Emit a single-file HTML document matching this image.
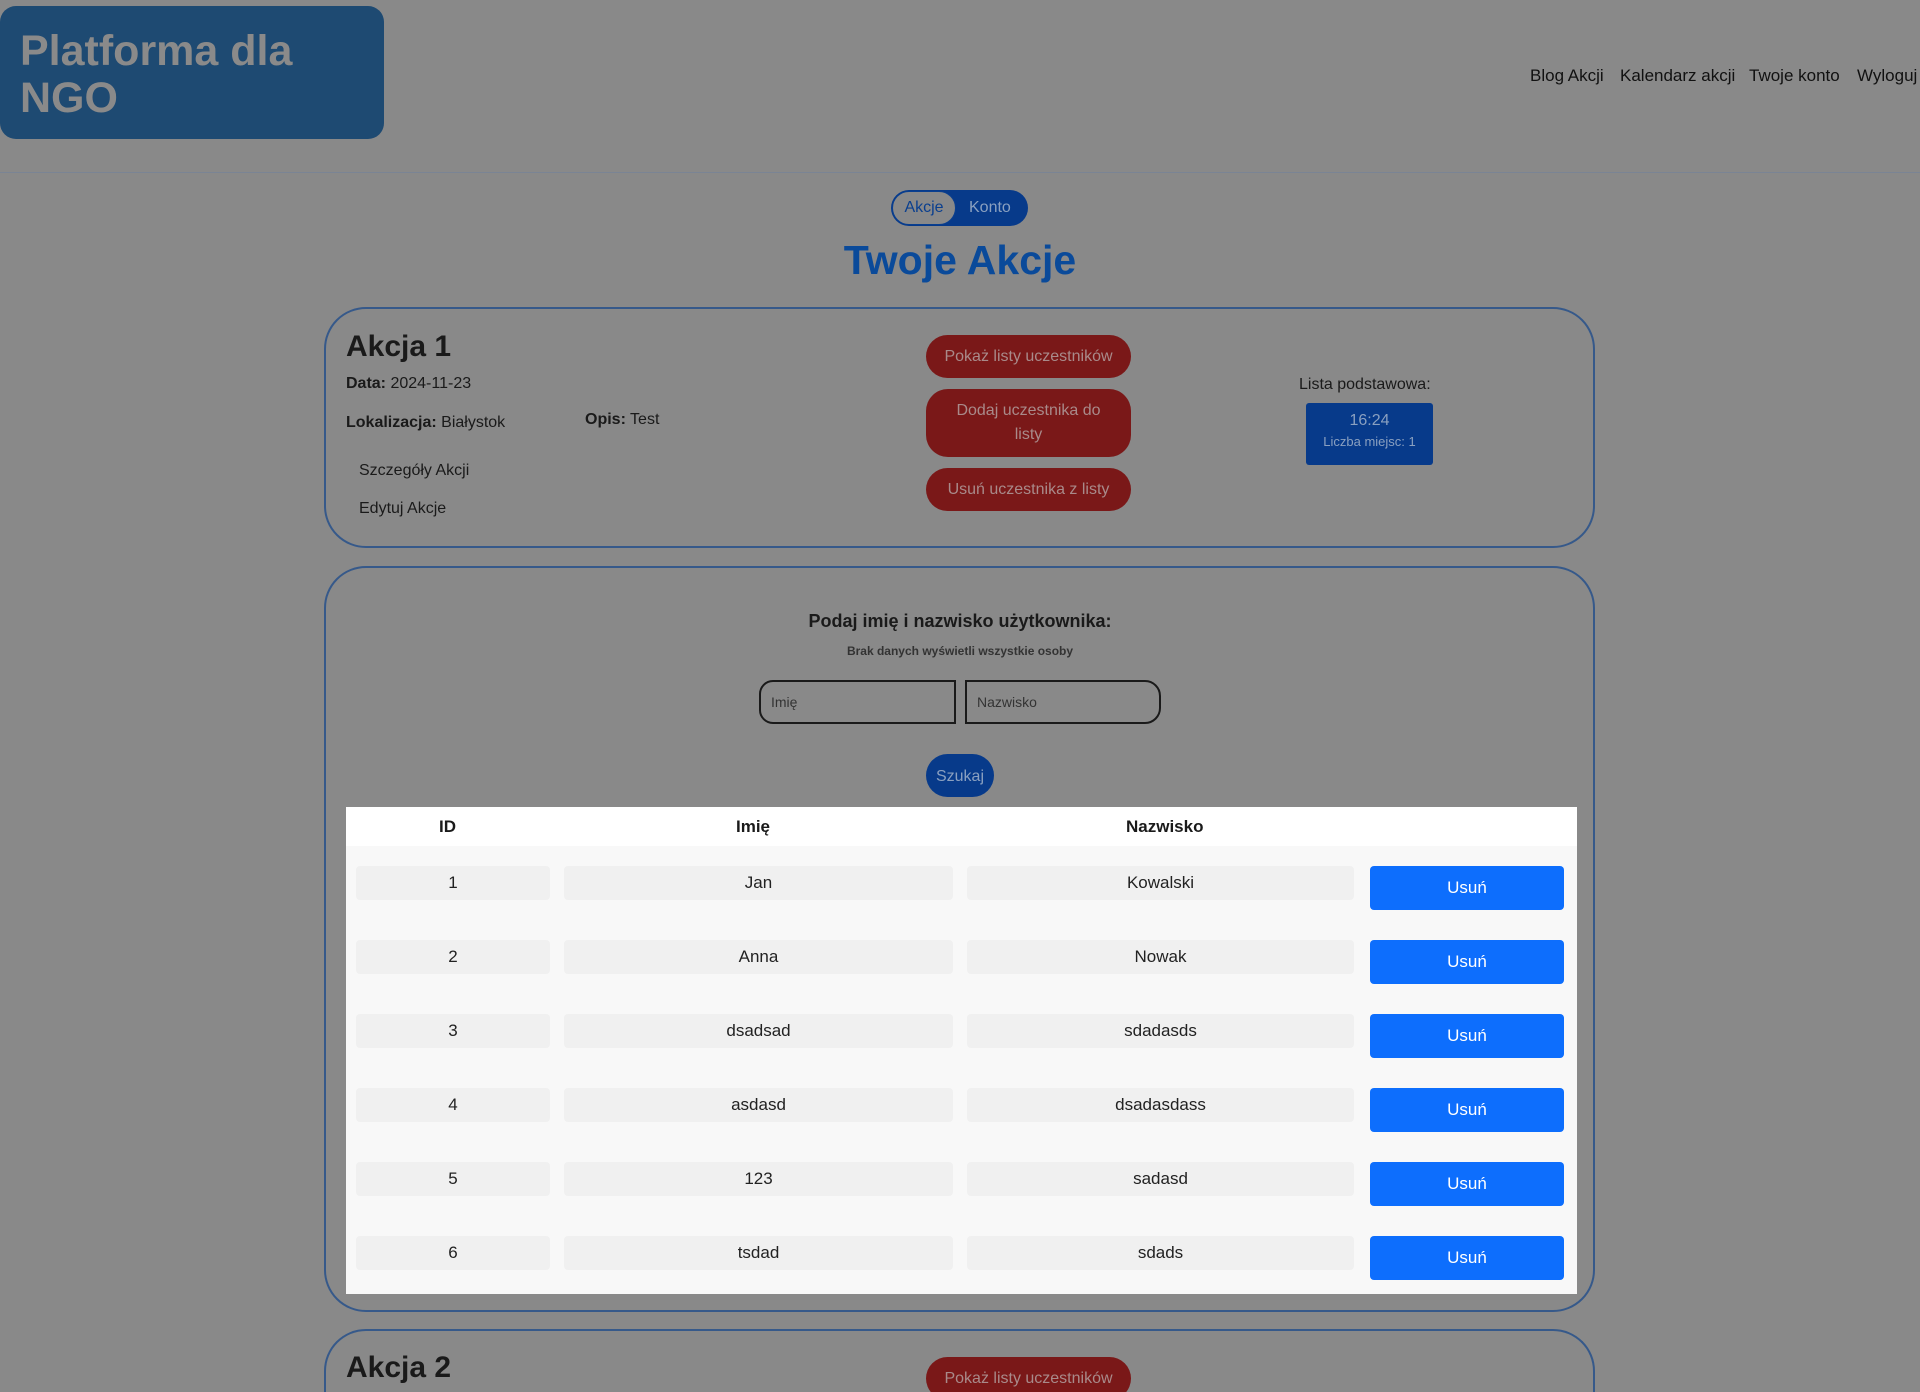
<!DOCTYPE html>
<html><head><meta charset="utf-8"><style>
*{box-sizing:border-box;margin:0;padding:0}
html,body{width:1920px;height:1392px;overflow:hidden}
body{background:#898989;font-family:"Liberation Sans","DejaVu Sans",sans-serif;color:#1a1a1a}
#w{position:relative;width:1920px;height:1392px;overflow:hidden}
.a{position:absolute}
.logo{left:0;top:6px;width:384px;height:133px;background:#1e4a72;border-radius:16px;color:#8a8a8a;font-weight:bold;font-size:43px;line-height:47px;padding:22px 0 0 20px}
.nav{top:66px;font-size:17px;color:#111}
.hr{left:0;top:172px;width:1920px;height:1px;background:#7a8494}
.card{left:324px;width:1271px;border:2px solid #36598a;border-radius:42px}
.rb{left:926px;width:205px;background:#7a1818;border-radius:22px;color:#a98a8a;font-size:16px;text-align:center;display:flex;align-items:center;justify-content:center;line-height:24px}
.lbl{font-size:16px}
.cell{background:#f0f0f0;border-radius:4px;height:34px;font-size:17px;text-align:center;line-height:34px;color:#222}
.btn{background:#0d6efd;border-radius:4px;height:44px;width:194px;left:1370px;color:#fff;font-size:17px;text-align:center;line-height:44px}
</style></head><body><div id="w">
<div class="a logo">Platforma dla<br>NGO</div>
<div class="a nav" style="left:1530px">Blog Akcji</div>
<div class="a nav" style="left:1620px">Kalendarz akcji</div>
<div class="a nav" style="left:1749px">Twoje konto</div>
<div class="a nav" style="left:1857px">Wyloguj</div>
<div class="a hr"></div>

<div class="a" style="left:891px;top:190px;width:137px;height:36px;background:#073a8a;border-radius:18px"></div>
<div class="a" style="left:892px;top:191px;width:64px;height:34px;border:1.5px solid #0a3f8f;background:#898989;border-radius:17px;color:#0a3f8f;font-size:16px;text-align:center;line-height:31px">Akcje</div>
<div class="a" style="left:969px;top:199px;font-size:16px;color:#8aa0c0">Konto</div>
<div class="a" style="left:0;width:1920px;top:237px;text-align:center;font-size:41px;font-weight:bold;color:#0a4a9a">Twoje Akcje</div>

<div class="a card" style="top:307px;height:241px"></div>
<div class="a" style="left:346px;top:330px;font-size:30px;font-weight:bold">Akcja 1</div>
<div class="a lbl" style="left:346px;top:375px"><b>Data:</b> 2024-11-23</div>
<div class="a lbl" style="left:346px;top:414px"><b>Lokalizacja:</b> Białystok</div>
<div class="a lbl" style="left:585px;top:411px"><b>Opis:</b> Test</div>
<div class="a lbl" style="left:359px;top:462px">Szczegóły Akcji</div>
<div class="a lbl" style="left:359px;top:500px">Edytuj Akcje</div>
<div class="a rb" style="top:335px;height:43px">Pokaż listy uczestników</div>
<div class="a rb" style="top:389px;height:68px;padding:0 18px">Dodaj uczestnika do listy</div>
<div class="a rb" style="top:468px;height:43px">Usuń uczestnika z listy</div>
<div class="a lbl" style="left:1299px;top:376px">Lista podstawowa:</div>
<div class="a" style="left:1306px;top:403px;width:127px;height:62px;background:#073a8a;border-radius:3px;text-align:center;color:#8aa0c0">
<div style="font-size:16px;margin-top:9px">16:24</div><div style="font-size:13px;margin-top:4px">Liczba miejsc: 1</div></div>

<div class="a card" style="top:566px;height:746px"></div>
<div class="a" style="left:0;width:1920px;top:611px;text-align:center;font-size:18px;font-weight:bold">Podaj imię i nazwisko użytkownika:</div>
<div class="a" style="left:0;width:1920px;top:644px;text-align:center;font-size:12px;font-weight:bold;color:#333">Brak danych wyświetli wszystkie osoby</div>
<div class="a" style="left:759px;top:680px;width:197px;height:44px;border:2px solid #1a1a1a;border-radius:14px 0 0 14px;font-size:14px;color:#333;padding:12px 10px">Imię</div>
<div class="a" style="left:965px;top:680px;width:196px;height:44px;border:2px solid #1a1a1a;border-radius:0 16px 16px 0;font-size:14px;color:#333;padding:12px 10px">Nazwisko</div>
<div class="a" style="left:926px;top:754px;width:68px;height:43px;background:#073a8a;border-radius:22px;color:#8aa0c0;font-size:16px;text-align:center;line-height:45px">Szukaj</div>

<div class="a" style="left:346px;top:807px;width:1231px;height:487px;background:#f8f8f8"></div>
<div class="a" style="left:346px;top:807px;width:1231px;height:39px;background:#fff;font-size:17px;font-weight:bold">
<span class="a" style="left:93px;top:10px">ID</span><span class="a" style="left:390px;top:10px">Imię</span><span class="a" style="left:780px;top:10px">Nazwisko</span></div>

<div class="a" style="left:0;top:866px">
<div class="a cell" style="left:356px;width:194px">1</div><div class="a cell" style="left:564px;width:389px">Jan</div><div class="a cell" style="left:967px;width:387px">Kowalski</div><div class="a btn">Usuń</div></div>
<div class="a" style="left:0;top:940px">
<div class="a cell" style="left:356px;width:194px">2</div><div class="a cell" style="left:564px;width:389px">Anna</div><div class="a cell" style="left:967px;width:387px">Nowak</div><div class="a btn">Usuń</div></div>
<div class="a" style="left:0;top:1014px">
<div class="a cell" style="left:356px;width:194px">3</div><div class="a cell" style="left:564px;width:389px">dsadsad</div><div class="a cell" style="left:967px;width:387px">sdadasds</div><div class="a btn">Usuń</div></div>
<div class="a" style="left:0;top:1088px">
<div class="a cell" style="left:356px;width:194px">4</div><div class="a cell" style="left:564px;width:389px">asdasd</div><div class="a cell" style="left:967px;width:387px">dsadasdass</div><div class="a btn">Usuń</div></div>
<div class="a" style="left:0;top:1162px">
<div class="a cell" style="left:356px;width:194px">5</div><div class="a cell" style="left:564px;width:389px">123</div><div class="a cell" style="left:967px;width:387px">sadasd</div><div class="a btn">Usuń</div></div>
<div class="a" style="left:0;top:1236px">
<div class="a cell" style="left:356px;width:194px">6</div><div class="a cell" style="left:564px;width:389px">tsdad</div><div class="a cell" style="left:967px;width:387px">sdads</div><div class="a btn">Usuń</div></div>

<div class="a card" style="top:1329px;height:63px;border-bottom:none;border-radius:42px 42px 0 0"></div>
<div class="a" style="left:346px;top:1351px;font-size:30px;font-weight:bold">Akcja 2</div>
<div class="a rb" style="top:1357px;height:43px">Pokaż listy uczestników</div>
</div></body></html>
